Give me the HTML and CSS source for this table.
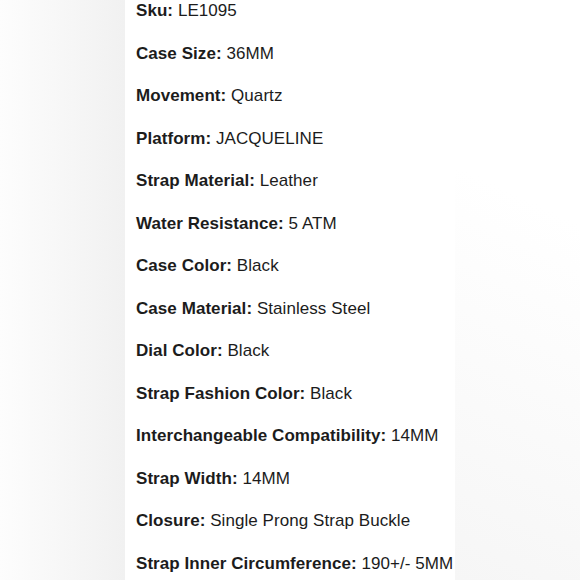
FILE: index.html
```html
<!DOCTYPE html>
<html>
<head>
<meta charset="utf-8">
<link rel="stylesheet" href="styles.css">
</head>
<body>
<div class="page">
  <div class="side side-left"></div>
  <div class="column">
    <ul class="specs">
      <li><b>Sku:</b> LE1095</li>
      <li><b>Case Size:</b> 36MM</li>
      <li><b>Movement:</b> Quartz</li>
      <li><b>Platform:</b> JACQUELINE</li>
      <li><b>Strap Material:</b> Leather</li>
      <li><b>Water Resistance:</b> 5 ATM</li>
      <li><b>Case Color:</b> Black</li>
      <li><b>Case Material:</b> Stainless Steel</li>
      <li><b>Dial Color:</b> Black</li>
      <li><b>Strap Fashion Color:</b> Black</li>
      <li><b>Interchangeable Compatibility:</b> 14MM</li>
      <li><b>Strap Width:</b> 14MM</li>
      <li><b>Closure:</b> Single Prong Strap Buckle</li>
      <li><b>Strap Inner Circumference:</b> 190+/- 5MM</li>
    </ul>
  </div>
  <div class="side side-right"></div>
</div>
</body>
</html>
```

FILE: styles.css
```css
html, body {
  margin: 0;
  padding: 0;
  width: 580px;
  height: 580px;
  overflow: hidden;
}
.page {
  display: flex;
  width: 580px;
  height: 580px;
}
.side {
  flex: 0 0 125px;
}
.side-left {
  background: linear-gradient(to right, #fdfdfd, #f1f1f1);
}
.side-right {
  flex: 1 1 auto;
  background: linear-gradient(205deg, #ffffff 35%, #f6f6f6 100%);
}
.column {
  flex: 0 0 330px;
  background: #ffffff;
  overflow: hidden;
}
.specs {
  list-style: none;
  margin: -10px 0 0 0;
  padding: 0 0 0 11px;
  font-family: "Liberation Sans", Arial, sans-serif;
  font-size: 17px;
  letter-spacing: 0.06px;
  line-height: 42.5px;
  color: #1c1c1c;
  white-space: nowrap;
}
.specs b {
  font-weight: bold;
}
```
